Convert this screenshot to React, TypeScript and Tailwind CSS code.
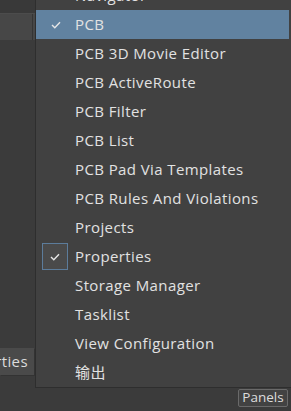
const items = [
  "Navigator",
  "PCB",
  "PCB 3D Movie Editor",
  "PCB ActiveRoute",
  "PCB Filter",
  "PCB List",
  "PCB Pad Via Templates",
  "PCB Rules And Violations",
  "Projects",
  "Properties",
  "Storage Manager",
  "Tasklist",
  "View Configuration",
  "输出",
];

const Check = () => (
  <svg width="10" height="8" viewBox="0 0 10 8" className="block">
    <polyline points="1,4 3.8,6.8 9,1.2" fill="none" stroke="#e6e6e6" strokeWidth="1.4" />
  </svg>
);

export default function App() {
  return (
    <div
      className="relative w-[291px] h-[411px] overflow-hidden bg-[#3b3b3b] text-[#dcdcdc]"
      style={{ fontFamily: '"Open Sans", "Noto Sans CJK SC", sans-serif' }}
    >
      {/* background panel strip */}
      <div className="h-[13px] bg-[#393939]" />
      <div className="flex h-[27px] border-t border-[#4c4c4c] bg-[#474747]">
        <div className="w-[32px]" />
        <div className="w-px bg-[#353535]" />
      </div>

      {/* bottom left tab */}
      <div className="absolute left-0 top-[348px] flex h-[27px] w-[34px] items-center justify-end overflow-hidden bg-[#4a4a4a] pr-[6px] shadow-[1px_1px_0_#333]">
        <span className="whitespace-nowrap text-[15px] tracking-[0.4px]">Properties</span>
      </div>

      {/* Panels button */}
      <div className="absolute left-[238px] top-[389px] flex h-[18px] w-[50px] items-center justify-center rounded-[2px] border border-[#6a6a6a] bg-[#424242] text-[13.5px] leading-none">
        Panels
      </div>

      {/* dropdown menu */}
      <div className="absolute left-[35px] top-[-19px] w-[256px] border-l border-b border-[#2e2e2e] bg-[#414141] pr-[2px]">
        {items.map((label) => {
          const selected = label === "PCB";
          const checked = label === "Properties";
          return (
            <div
              key={label}
              className={`flex h-[29px] items-center ${selected ? "bg-[#6182a0]" : ""}`}
            >
              <div className="flex w-[39px] justify-center">
                {selected && <Check />}
                {checked && (
                  <div className="ml-[-1px] flex h-[27px] w-[26px] items-center justify-center border border-[#5c7c9b] bg-[#4a4a4a]">
                    <Check />
                  </div>
                )}
              </div>
              <span className="whitespace-nowrap text-[15px] leading-none tracking-[0.4px] text-[#e2e2e2]">{label}</span>
            </div>
          );
        })}
      </div>
    </div>
  );
}
